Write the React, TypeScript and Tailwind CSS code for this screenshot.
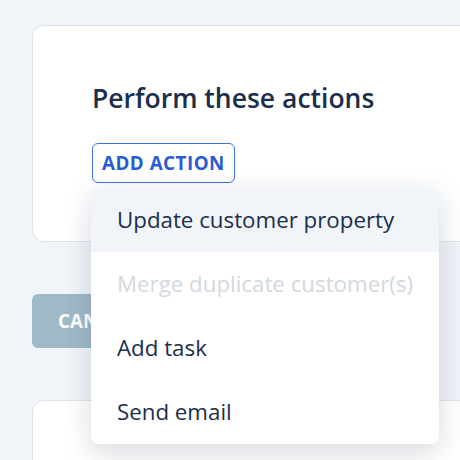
import React from "react";

const items = [
  { label: "Update customer property", active: true },
  { label: "Merge duplicate customer(s)", disabled: true },
  { label: "Add task" },
  { label: "Send email" },
];

export default function App() {
  return (
    <div className="relative h-[460px] w-[460px] overflow-hidden bg-[#f1f4f9] font-['Open_Sans',sans-serif]">
      <div className="pl-8 pt-[25px]">
        <div className="h-[217px] w-[600px] rounded-xl border border-[#dde3ea] bg-white pl-[59px] pt-[54px]">
          <h2 className="text-[26.5px] font-semibold leading-9 text-[#1b2e4b]">Perform these actions</h2>
          <button className="mt-[27px] h-10 rounded-md border border-[#3b6ee0] px-[9px] text-[18.8px] font-bold tracking-[0.5px] text-[#2a5bd7]">
            ADD ACTION
          </button>
        </div>
        <button className="mt-[52px] h-[54px] w-[140px] rounded-md bg-[#9fb9c6] pl-[26px] text-left text-[18.8px] font-bold text-white">
          CANCEL
        </button>
        <div className="mt-[52px] h-[200px] w-[600px] rounded-xl border border-[#dde3ea] bg-white" />
      </div>

      <div className="absolute left-[91px] top-[188px] w-[348px] overflow-hidden rounded-lg bg-white shadow-[0_8px_28px_rgba(30,45,70,0.18)]">
        {items.map((it) => (
          <div
            key={it.label}
            className={
              "flex h-16 items-center pl-[26px] text-[22.3px] " +
              (it.active ? "bg-[#f1f4f9] text-[#1b2e4b]" : it.disabled ? "text-[#d3d8de]" : "text-[#1b2e4b]")
            }
          >
            {it.label}
          </div>
        ))}
      </div>
    </div>
  );
}
